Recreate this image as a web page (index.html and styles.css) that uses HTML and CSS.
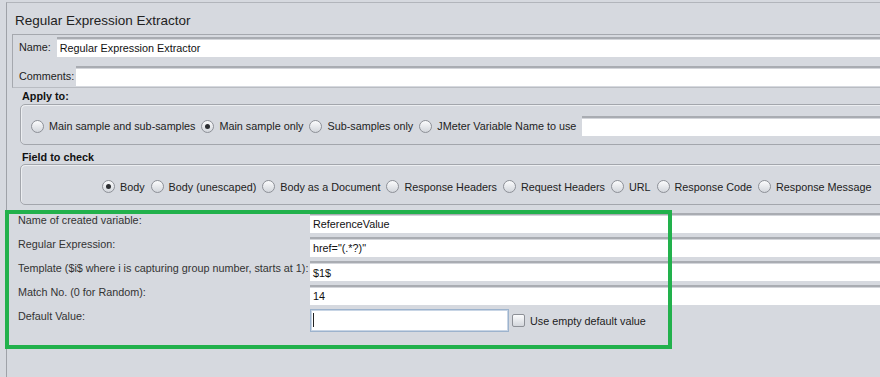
FILE: index.html
```html
<!DOCTYPE html>
<html lang="en">
<head>
    <meta charset="UTF-8">
    <meta name="viewport" content="width=device-width, initial-scale=1.0">
    <title>Regular Expression Extractor</title>
    <link rel="stylesheet" href="styles.css">
</head>
<body>
    <div class="frame">
        <h1 class="title">Regular Expression Extractor</h1>

        <div class="info-box">
            <div class="info-row">
                <span class="info-label name-label">Name:</span>
                <div class="field">Regular Expression Extractor</div>
            </div>
            <div class="info-row">
                <span class="info-label">Comments:</span>
                <div class="field"></div>
            </div>
        </div>

        <div class="section">
            <div class="section-title">Apply to:</div>
            <div class="panel apply-panel">
                <label class="opt"><span class="radio"></span>Main sample and sub-samples</label>
                <label class="opt"><span class="radio checked"></span>Main sample only</label>
                <label class="opt"><span class="radio"></span>Sub-samples only</label>
                <label class="opt"><span class="radio"></span>JMeter Variable Name to use</label>
                <div class="field"></div>
            </div>

            <div class="section-title field-title">Field to check</div>
            <div class="panel check-panel">
                <label class="opt"><span class="radio checked"></span>Body</label>
                <label class="opt"><span class="radio"></span>Body (unescaped)</label>
                <label class="opt"><span class="radio"></span>Body as a Document</label>
                <label class="opt"><span class="radio"></span>Response Headers</label>
                <label class="opt"><span class="radio"></span>Request Headers</label>
                <label class="opt"><span class="radio"></span>URL</label>
                <label class="opt"><span class="radio"></span>Response Code</label>
                <label class="opt"><span class="radio"></span>Response Message</label>
            </div>
        </div>

        <div class="vars">
            <div class="var-label">Name of created variable:</div>
            <div class="field">ReferenceValue</div>

            <div class="var-label">Regular Expression:</div>
            <div class="field">href="(.*?)"</div>

            <div class="var-label">Template ($i$ where i is capturing group number, starts at 1):</div>
            <div class="field low">$1$</div>

            <div class="var-label">Match No. (0 for Random):</div>
            <div class="field">14</div>

            <div class="var-label">Default Value:</div>
            <div class="default-row">
                <div class="field focused"><span class="caret"></span></div>
                <label class="opt check-opt"><span class="checkbox"></span>Use empty default value</label>
            </div>
        </div>
    </div>

    <!-- annotation box -->
    <div class="highlight"></div>
</body>
</html>
```

FILE: styles.css
```css
body {
    margin: 0;
    background: #d6d9df;
    font-family: 'Liberation Sans', Arial, sans-serif;
    font-size: 10.8px;
    color: #222;
    overflow: hidden;
    height: 377px;
}
.frame {
    width: 1000px;
    height: 380px;
    margin: 2px 0 0 6px;
    padding-left: 5px;
    border-top: 1px solid #b2b5bb;
    border-left: 1px solid #9fa2a8;
}
.title {
    margin: 10px 0 5px 3px;
    font-size: 13.5px;
    line-height: 16px;
    font-weight: normal;
    color: #222;
}
.field {
    flex: 1;
    box-sizing: border-box;
    height: 20px;
    padding: 0 3px;
    background: white;
    border-top: 2px solid #a9acb2;
    box-shadow: inset 0 1px 0 #d3d5da;
    line-height: 18px;
    color: #111;
    white-space: nowrap;
}
.info-box {
    border-top: 1px solid #a5a8ae;
    border-left: 1px solid #a5a8ae;
    border-bottom: 1px solid #b9bcc2;
    padding: 2px 0 1px 6px;
}
.info-row {
    display: flex;
    align-items: center;
    gap: 2px;
}
.info-row + .info-row {
    margin-top: 9px;
}
.name-label {
    margin-right: 4px;
}
.section {
    margin-left: 8px;
}
.section-title {
    font-weight: bold;
    line-height: 13px;
    margin: 2px 0 1px 2px;
    color: #111;
}
.field-title {
    margin-top: 6px;
    margin-bottom: 0;
}
.panel {
    display: flex;
    align-items: center;
    border: 1px solid #a3a6ac;
    border-radius: 5px;
    box-shadow: inset 1px 1px 0 #eceef1;
    height: 41px;
    box-sizing: border-box;
}
.apply-panel {
    padding: 11px 0 8px 10px;
}
.check-panel {
    padding: 14px 0 10px 81px;
}
.opt {
    display: inline-flex;
    align-items: center;
    gap: 5px;
    margin-right: 6px;
    white-space: nowrap;
    color: #222;
}
.radio {
    width: 13px;
    height: 13px;
    box-sizing: border-box;
    border-radius: 50%;
    border: 1px solid #8d9097;
    background: linear-gradient(#fbfcfd, #d3d6dc);
    position: relative;
}
.radio.checked::after {
    content: '';
    position: absolute;
    left: 3px;
    top: 3px;
    width: 5px;
    height: 5px;
    border-radius: 50%;
    background: #2b2d31;
}
.vars {
    display: grid;
    grid-template-columns: 292px 1fr;
    row-gap: 4px;
    margin-top: 8px;
    padding-left: 6px;
}
.var-label {
    line-height: 13px;
    padding-top: 1px;
    color: #333;
    white-space: nowrap;
}
.field.low {
    line-height: 21px;
}
.default-row {
    display: flex;
    align-items: center;
}
.default-row .field.focused {
    flex: none;
    width: 199px;
    height: 23px;
    border: 1px solid #9db3cd;
    box-shadow: inset 0 0 0 1px #c8d5e5;
    padding: 3px 2px;
}
.caret {
    display: block;
    width: 1px;
    height: 14px;
    background: #222;
}
.check-opt {
    margin-left: 3px;
    gap: 5px;
}
.checkbox {
    width: 13px;
    height: 13px;
    box-sizing: border-box;
    border: 1px solid #8d9097;
    border-radius: 2px;
    background: linear-gradient(#fbfcfd, #d3d6dc);
}
.highlight {
    position: absolute;
    left: 5px;
    top: 210px;
    width: 667px;
    height: 139px;
    box-sizing: border-box;
    border: 4px solid #22b14c;
}
```
